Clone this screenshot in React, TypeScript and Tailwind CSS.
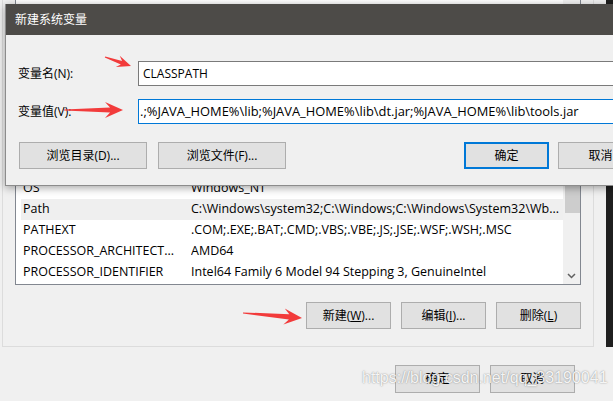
import React from 'react';

type Pt = [number, number];

function Arrow({ tail, tip, head = 16, half = 7 }: { tail: Pt; tip: Pt; head?: number; half?: number }) {
  const dx = tip[0] - tail[0];
  const dy = tip[1] - tail[1];
  const len = Math.hypot(dx, dy);
  const ux = dx / len;
  const uy = dy / len;
  const nx = -uy;
  const ny = ux;
  const bx = tip[0] - ux * head;
  const by = tip[1] - uy * head;
  const kx = tip[0] - ux * head * 0.72;
  const ky = tip[1] - uy * head * 0.72;
  const sw = half * 0.32;
  const pts: Pt[] = [
    [tail[0] + nx * 0.6, tail[1] + ny * 0.6],
    [kx + nx * sw, ky + ny * sw],
    [bx + nx * half, by + ny * half],
    tip,
    [bx - nx * half, by - ny * half],
    [kx - nx * sw, ky - ny * sw],
    [tail[0] - nx * 0.6, tail[1] - ny * 0.6],
  ];
  return <polygon points={pts.map((p) => p.join(',')).join(' ')} fill="#f23b3b" />;
}

function Btn({
  children,
  className = '',
  primary = false,
}: {
  children: React.ReactNode;
  className?: string;
  primary?: boolean;
}) {
  return (
    <div
      className={`flex shrink-0 items-center justify-center bg-[#e1e1e1] text-[12px] text-black ${
        primary ? 'border-2 border-[#0078d7]' : 'border border-[#adadad]'
      } ${className}`}
    >
      {children}
    </div>
  );
}

const rows = [
  { name: 'ComSpec', value: 'C:\\Windows\\system32\\cmd.exe' },
  { name: 'DriverData', value: 'C:\\Windows\\System32\\Drivers\\DriverData' },
  { name: 'JAVA_HOME', value: 'C:\\Program Files\\Java\\jdk1.8.0_201' },
  { name: 'NUMBER_OF_PROCESSORS', value: '4' },
  { name: 'OS', value: 'Windows_NT' },
  { name: 'Path', value: 'C:\\Windows\\system32;C:\\Windows;C:\\Windows\\System32\\Wb...', selected: true },
  { name: 'PATHEXT', value: '.COM;.EXE;.BAT;.CMD;.VBS;.VBE;.JS;.JSE;.WSF;.WSH;.MSC' },
  { name: 'PROCESSOR_ARCHITECT...', value: 'AMD64' },
  { name: 'PROCESSOR_IDENTIFIER', value: 'Intel64 Family 6 Model 94 Stepping 3, GenuineIntel' },
];

export default function App() {
  return (
    <div className="relative h-[401px] w-[613px] overflow-hidden bg-[#f0f0f0] font-['Open_Sans','Noto_Sans_CJK_SC',sans-serif] text-black">
      {/* background: environment variables window */}
      <div className="flex">
        <div className="ml-[2px] flex h-[347px] w-[592px] flex-col border-x border-b border-[#dcdcdc] pl-[12px]">
          <div className="flex h-[285px] w-[566px] border-x border-b border-[#828790] bg-white">
            <div className="flex min-w-0 flex-1 flex-col">
              <div className="h-[24px] shrink-0 bg-gradient-to-b from-white to-[#e3e3e3]" />
              <div className="flex flex-1 flex-col justify-end overflow-hidden pb-[1px] pl-[5px]">
                {rows.map((r) => (
                  <div
                    key={r.name}
                    className={`flex h-[21px] shrink-0 items-center whitespace-nowrap pl-[2px] text-[12.5px] ${
                      r.selected ? 'bg-[#efefef]' : ''
                    }`}
                  >
                    <div className="w-[168px] shrink-0 overflow-hidden">{r.name}</div>
                    <div className="min-w-0 flex-1 overflow-hidden">{r.value}</div>
                  </div>
                ))}
              </div>
            </div>
            <div className="flex w-[17px] shrink-0 flex-col items-end bg-[#f0f0f0]">
              <div className="mt-[150px] h-[63px] w-[15px] bg-[#cdcdcd]" />
              <div className="flex-1" />
              <div className="flex h-[17px] w-[17px] items-center justify-center">
                <svg width="9" height="6" viewBox="0 0 9 6">
                  <path d="M1 1 L4.5 4.5 L8 1" fill="none" stroke="#606060" strokeWidth="1.5" />
                </svg>
              </div>
            </div>
          </div>
          <div className="mt-[17px] flex justify-end gap-[10px] pr-[12px]">
            <Btn className="h-[27px] w-[85px]">
              新建(<span className="underline">W</span>)...
            </Btn>
            <Btn className="h-[27px] w-[85px]">
              编辑(<span className="underline">I</span>)...
            </Btn>
            <Btn className="h-[27px] w-[85px]">
              删除(<span className="underline">L</span>)
            </Btn>
          </div>
        </div>
        <div className="ml-auto h-[347px] w-[7px] bg-[#1f1f1f]" />
      </div>
      <div className="mt-[18px] flex justify-end gap-[10px] pr-[38px]">
        <Btn className="h-[28px] w-[85px]">确定</Btn>
        <Btn className="h-[28px] w-[85px]">取消</Btn>
      </div>

      {/* watermark */}
      <div className="absolute left-[362px] top-[366px] whitespace-nowrap font-['Liberation_Sans',sans-serif] text-[16px] text-white/90 [text-shadow:0_0_1.5px_rgba(0,0,0,0.5)]">
        https://blog.csdn.net/qq_33190041
      </div>

      {/* foreground dialog: 新建系统变量 */}
      <div className="absolute left-[5px] top-[4px] flex h-[182px] w-[700px] flex-col border-b border-l border-[#8c8c8c] bg-[#f0f0f0] shadow-[0_2px_8px_rgba(0,0,0,0.35)]">
        <div className="flex h-[31px] shrink-0 items-center bg-[#4d4b48] pl-[9px] text-[12px] text-white">
          新建系统变量
        </div>
        <div className="flex flex-col pl-[12px]">
          <div className="mt-[26px] flex items-center">
            <div className="w-[120px] text-[12px]">变量名(N):</div>
            <div className="flex h-[25px] flex-1 items-center border border-[#7a7a7a] bg-white pl-[4px] text-[12px]">
              CLASSPATH
            </div>
          </div>
          <div className="mt-[13px] flex items-center">
            <div className="w-[120px] text-[12px]">变量值(V):</div>
            <div className="flex h-[25px] flex-1 items-center whitespace-nowrap border border-[#0078d7] bg-white pl-[1px] text-[12.9px]">
              .;%JAVA_HOME%\lib;%JAVA_HOME%\lib\dt.jar;%JAVA_HOME%\lib\tools.jar
            </div>
          </div>
          <div className="mt-[18px] flex pl-[1px]">
            <Btn className="h-[27px] w-[128px]">浏览目录(D)...</Btn>
            <Btn className="ml-[11px] h-[27px] w-[128px]">浏览文件(F)...</Btn>
            <Btn primary className="ml-[178px] h-[27px] w-[85px]">
              确定
            </Btn>
            <Btn className="ml-[9px] h-[27px] w-[85px]">取消</Btn>
          </div>
        </div>
      </div>

      {/* red annotation arrows */}
      <svg className="pointer-events-none absolute left-0 top-0" width="613" height="401">
        <Arrow tail={[105, 57]} tip={[131, 66]} head={14} half={6} />
        <Arrow tail={[64, 110]} tip={[123, 110]} head={18} half={8} />
        <Arrow tail={[243, 313]} tip={[302, 318]} head={18} half={8} />
      </svg>
    </div>
  );
}
